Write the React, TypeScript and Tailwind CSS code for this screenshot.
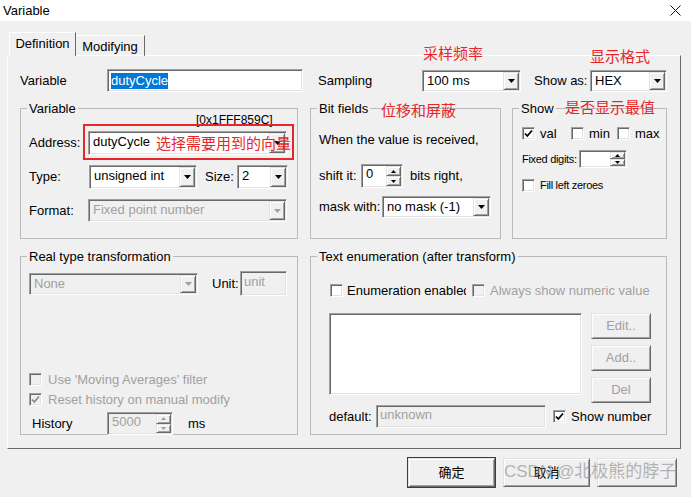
import clsx from "clsx";
import type { ReactNode } from "react";

const sunken =
  "border border-t-[#a0a0a0] border-l-[#a0a0a0] border-b-white border-r-white shadow-[inset_1px_1px_0_#696969,inset_-1px_-1px_0_#e3e3e3]";
const raised =
  "border border-t-[#e3e3e3] border-l-[#e3e3e3] border-r-[#696969] border-b-[#696969] shadow-[inset_1px_1px_0_#fff,inset_-1px_-1px_0_#a0a0a0] bg-[#f0f0f0]";

const Arrow = ({ up, disabled, small }: { up?: boolean; disabled?: boolean; small?: boolean }) => (
  <svg
    width={small ? 5 : 7}
    height={small ? 3 : 4}
    viewBox={small ? "0 0 5 3" : "0 0 7 4"}
    className={clsx(up && "rotate-180")}
  >
    <path d={small ? "M0 0h5L2.5 3z" : "M0 0h7L3.5 4z"} fill={disabled ? "#a0a0a0" : "#000"} />
  </svg>
);

/** 下向き三角のボタン付きコンボボックス */
const Combo = ({
  className,
  value,
  disabled,
}: {
  className: string;
  value: string;
  disabled?: boolean;
}) => (
  <div className={clsx("flex p-px", sunken, disabled ? "bg-[#f0f0f0]" : "bg-white", className)}>
    <span
      className={clsx(
        "flex-1 truncate pl-[3px] leading-[18px]",
        disabled ? "text-[#a0a0a0]" : "text-black",
      )}
    >
      {value}
    </span>
    <span className={clsx("flex w-[16px] items-center justify-center", raised)}>
      <Arrow disabled={disabled} />
    </span>
  </div>
);

const Spin = ({
  className,
  value,
  disabled,
}: {
  className: string;
  value: string;
  disabled?: boolean;
}) => (
  <div className={clsx("flex p-px", sunken, disabled ? "bg-[#f0f0f0]" : "bg-white", className)}>
    <span className={clsx("flex-1 pl-[3px] leading-[16px]", disabled ? "text-[#a0a0a0]" : "text-black")}>
      {value}
    </span>
    <span className="flex w-[15px] flex-col">
      <span className={clsx("flex flex-1 items-center justify-center", raised)}>
        <Arrow up small disabled={disabled} />
      </span>
      <span className={clsx("flex flex-1 items-center justify-center", raised)}>
        <Arrow small disabled={disabled} />
      </span>
    </span>
  </div>
);

const Check = ({ checked, disabled }: { checked?: boolean; disabled?: boolean }) => (
  <span
    className={clsx(
      "flex size-[13px] shrink-0 items-center justify-center",
      sunken,
      disabled ? "bg-[#f0f0f0]" : "bg-white",
    )}
  >
    {checked && (
      <svg width="9" height="9" viewBox="0 0 9 9">
        <path
          d="M1 4.5l2.3 2.5L8 1.5"
          fill="none"
          stroke={disabled ? "#8a8a8a" : "#000"}
          strokeWidth="1.8"
        />
      </svg>
    )}
  </span>
);

const Group = ({ title, className, children }: { title: string; className: string; children: ReactNode }) => (
  <fieldset className={clsx("relative border border-[#b9b9b9]", className)}>
    <legend className="ml-[6px] px-[2px] leading-[15px]">{title}</legend>
    {children}
  </fieldset>
);

const Button = ({ children, className, disabled }: { children: ReactNode; className: string; disabled?: boolean }) => (
  <div
    className={clsx(
      "flex items-center justify-center",
      raised,
      disabled ? "text-[#a0a0a0]" : "text-black",
      className,
    )}
  >
    {children}
  </div>
);

const Note = ({ children, className }: { children: ReactNode; className: string }) => (
  <span
    className={clsx(
      "absolute whitespace-nowrap font-['Noto_Sans_CJK_SC',sans-serif] text-[15px] leading-none text-[#e8262a]",
      className,
    )}
  >
    {children}
  </span>
);

export default function App() {
  return (
    <div className="relative h-[497px] w-[691px] overflow-hidden bg-[#f0f0f0] font-['Liberation_Sans','Noto_Sans_CJK_SC',Arial,sans-serif] text-[13px] text-black">
      {/* タイトルバー */}
      <div className="flex h-[21px] items-center justify-between bg-white pl-[3px] pr-[10px]">
        <span className="leading-none">Variable</span>
        <svg width="11" height="11" viewBox="0 0 11 11">
          <path d="M0.5 0.5l10 10M10.5 0.5l-10 10" stroke="#111" strokeWidth="1" />
        </svg>
      </div>

      <div className="pl-[7px] pt-[11px]">
        {/* タブ */}
        <div className="relative z-10 -mb-px flex items-end pl-[2px]">
          <div className="flex h-[24px] w-[67px] items-center justify-center border-l border-t border-r border-l-white border-t-white border-r-[#696969] bg-[#f0f0f0] pb-[1px]">
            Definition
          </div>
          <div className="flex h-[21px] w-[69px] items-center justify-center border-t border-r border-t-white border-r-[#696969] pt-[2px]">
            Modifying
          </div>
        </div>

        {/* タブパネル */}
        <div className="h-[394px] w-[674px] border border-t-white border-l-white border-r-[#696969] border-b-[#696969] pl-[12px] pt-[13px]">
          <div className="flex h-[23px] items-center">
            <span className="w-[87px]">Variable</span>
            <div className={clsx("flex h-[23px] w-[196px] items-center bg-white pl-[3px]", sunken)}>
              <span className="bg-[#0078d7] leading-[16px] text-white">dutyCycle</span>
            </div>
            <span className="ml-[15px] w-[104px]">Sampling</span>
            <Combo className="h-[22px] w-[99px]" value="100 ms" />
            <span className="ml-[13px] w-[56px]">Show as:</span>
            <Combo className="h-[22px] w-[77px]" value="HEX" />
          </div>

          <div className="mt-[9px] flex">
            <Group title="Variable" className="h-[138px] w-[278px]">
              <div className="px-[8px]">
                <div className="-mt-[3px] h-[15px] pl-[167px] text-[12px] leading-[15px]">[0x1FFF859C]</div>
                <div className="mt-[3px] flex items-center">
                  <span className="w-[59px]">Address:</span>
                  <Combo className="h-[24px] w-[199px]" value="dutyCycle" />
                </div>
                <div className="mt-[10px] flex items-center">
                  <span className="w-[60px]">Type:</span>
                  <Combo className="h-[24px] w-[108px]" value="unsigned int" />
                  <span className="ml-[8px] w-[32px]">Size:</span>
                  <Combo className="h-[24px] w-[51px]" value="2" />
                </div>
                <div className="mt-[10px] flex items-center">
                  <span className="w-[59px]">Format:</span>
                  <Combo className="h-[23px] w-[199px]" value="Fixed point number" disabled />
                </div>
              </div>
              <div className="pointer-events-none absolute left-[62px] top-[8px] h-[36px] w-[211px] border-2 border-[#e8262a]" />
            </Group>

            <Group title="Bit fields" className="ml-[12px] h-[138px] w-[191px]">
              <div className="pl-[8px]">
                <div className="mt-[16px] leading-[15px]">When the value is received,</div>
                <div className="mt-[17px] flex items-center">
                  <span className="w-[42px]">shift it:</span>
                  <Spin className="h-[24px] w-[42px]" value="0" />
                  <span className="ml-[7px]">bits right,</span>
                </div>
                <div className="mt-[8px] flex items-center">
                  <span className="w-[63px]">mask with:</span>
                  <Combo className="h-[22px] w-[109px]" value="no mask (-1)" />
                </div>
              </div>
            </Group>

            <Group title="Show" className="ml-[11px] h-[138px] w-[155px]">
              <div className="pl-[9px]">
                <div className="mt-[11px] flex h-[13px] items-center">
                  <span className="flex w-[49px] items-center gap-[5px]">
                    <Check checked />
                    val
                  </span>
                  <span className="flex w-[46px] items-center gap-[5px]">
                    <Check />
                    min
                  </span>
                  <span className="flex items-center gap-[5px]">
                    <Check />
                    max
                  </span>
                </div>
                <div className="mt-[10px] flex items-center">
                  <span className="w-[57px] text-[11px] tracking-[-0.3px]">Fixed digits:</span>
                  <Spin className="h-[18px] w-[48px]" value="" />
                </div>
                <div className="mt-[11px] flex h-[13px] items-center gap-[5px]">
                  <Check />
                  <span className="text-[11px] tracking-[-0.3px]">Fill left zeroes</span>
                </div>
              </div>
            </Group>
          </div>

          <div className="mt-[10px] flex">
            <Group title="Real type transformation" className="h-[186px] w-[278px]">
              <div className="pl-[8px]">
                <div className="mt-[7px] flex items-center">
                  <Combo className="h-[22px] w-[169px]" value="None" disabled />
                  <span className="ml-[14px] w-[28px]">Unit:</span>
                  <div className={clsx("h-[25px] w-[47px] bg-[#f0f0f0] pl-[3px] leading-[20px] text-[#a0a0a0]", sunken)}>
                    unit
                  </div>
                </div>
                <div className="mt-[77px] flex h-[13px] items-center gap-[6px] text-[#a0a0a0]">
                  <Check disabled />
                  Use 'Moving Averages' filter
                </div>
                <div className="mt-[7px] flex h-[13px] items-center gap-[6px] text-[#a0a0a0]">
                  <Check checked disabled />
                  Reset history on manual modify
                </div>
                <div className="mt-[6px] flex items-center">
                  <span className="w-[78px] pl-[3px]">History</span>
                  <Spin className="h-[23px] w-[66px]" value="5000" disabled />
                  <span className="ml-[15px]">ms</span>
                </div>
              </div>
            </Group>

            <Group title="Text enumeration (after transform)" className="ml-[12px] h-[186px] w-[357px]">
              <div className="pl-[18px]">
                <div className="mt-[20px] flex h-[13px] items-center">
                  <span className="ml-[1px]">
                    <Check />
                  </span>
                  <span className="ml-[4px] w-[119px] overflow-hidden whitespace-nowrap">Enumeration enabled</span>
                  <span className="ml-[6px]">
                    <Check disabled />
                  </span>
                  <span className="ml-[5px] text-[#a0a0a0]">Always show numeric value</span>
                </div>
                <div className="mt-[16px] flex">
                  <div className={clsx("h-[82px] w-[253px] bg-white", sunken)} />
                  <div className="ml-[9px] flex flex-col gap-[6px]">
                    <Button className="h-[26px] w-[60px]" disabled>
                      Edit..
                    </Button>
                    <Button className="h-[26px] w-[60px]" disabled>
                      Add..
                    </Button>
                    <Button className="h-[26px] w-[60px]" disabled>
                      Del
                    </Button>
                  </div>
                </div>
                <div className="mt-[2px] flex items-center">
                  <span className="w-[47px]">default:</span>
                  <div className={clsx("h-[23px] w-[170px] bg-[#f0f0f0] pl-[3px] leading-[18px] text-[#a0a0a0]", sunken)}>
                    unknown
                  </div>
                  <span className="ml-[7px]">
                    <Check checked />
                  </span>
                  <span className="ml-[5px]">Show number</span>
                </div>
              </div>
            </Group>
          </div>
        </div>

        {/* 下部ボタン */}
        <div className="mt-[9px] flex pl-[401px]">
          <Button className="h-[29px] w-[87px] outline outline-1 outline-[#3c3c3c]">确定</Button>
          <Button className="ml-[8px] h-[29px] w-[87px]">取消</Button>
          <Button className="ml-[7px] h-[29px] w-[80px]" disabled>
            {""}
          </Button>
        </div>
      </div>

      {/* 注釈 */}
      <Note className="left-[423px] top-[45px]">采样频率</Note>
      <Note className="left-[590px] top-[48px]">显示格式</Note>
      <Note className="left-[381px] top-[102px]">位移和屏蔽</Note>
      <Note className="left-[565px] top-[99px]">是否显示最值</Note>
      <Note className="left-[156px] top-[135px]">选择需要用到的向量</Note>
      <span className="absolute left-[504px] top-[463px] whitespace-nowrap font-['Liberation_Sans','Noto_Sans_CJK_SC',sans-serif] text-[17px] leading-none text-[#8a8a8a] opacity-60">
        CSDN @北极熊的脖子
      </span>
    </div>
  );
}
